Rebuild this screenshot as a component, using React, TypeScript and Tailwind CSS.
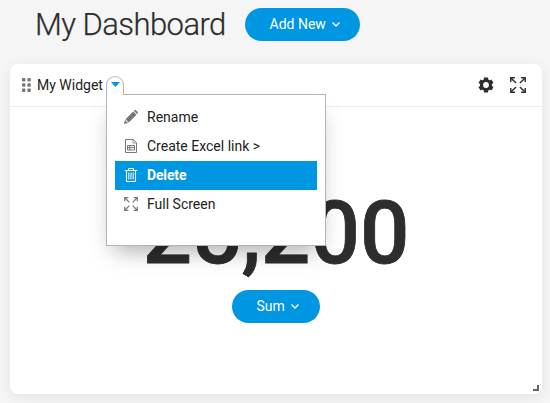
import React, { useState } from 'react';

type IconProps = { className?: string };

const PencilIcon = ({ className }: IconProps) => (
  <svg viewBox="0 0 14 14" className={className} fill="currentColor">
    <path d="M0 14l1-4.1L4.1 13 0 14z" />
    <path d="M1.5 9.2L9.2 1.5l3.3 3.3-7.7 7.7z" />
    <path d="M9.9.9l.5-.5c.5-.5 1.3-.5 1.8 0l1.4 1.4c.5.5.5 1.3 0 1.8l-.5.5z" />
  </svg>
);

const SheetIcon = ({ className }: IconProps) => (
  <svg viewBox="0 0 14 14" className={className} fill="none" stroke="currentColor">
    <path d="M1.5.5h7.8l3.2 3.2v9.8h-11z" />
    <path d="M9 .8V4h3.2" strokeWidth=".8" />
    <path d="M3.5 6.5h7v4.5h-7zM3.5 8.6h7M5.8 6.5V11" />
  </svg>
);

const TrashIcon = ({ className }: IconProps) => (
  <svg viewBox="0 0 14 14" className={className} fill="none" stroke="currentColor">
    <path d="M.8 2.5h12.4M4.5 2.3V.5h5v1.8" />
    <path d="M2.5 2.5v10.2q0 .8.8.8h7.4q.8 0 .8-.8V2.5" strokeWidth="1.1" />
    <path d="M4.8 4.5v7M7 4.5v7M9.2 4.5v7" />
  </svg>
);

const ExpandIcon = ({ className }: IconProps) => (
  <svg viewBox="0 0 16 16" className={className} fill="none" stroke="currentColor" strokeWidth="1.4">
    <path d="M4.9.8H.8v4.1M11.1.8h4.1v4.1M.8 11.1v4.1h4.1M15.2 11.1v4.1h-4.1" />
    <path d="M.9.9l5.2 5.2M15.1.9L9.9 6.1M.9 15.1l5.2-5.2M15.1 15.1L9.9 9.9" />
  </svg>
);

const GearIcon = ({ className }: IconProps) => (
  <svg viewBox="0 0 16 16" className={className} fill="none" stroke="currentColor">
    <circle cx="8" cy="8" r="4.5" strokeWidth="3.2" />
    <path
      d="M8 .5v3M8 12.5v3M1.5 4.25l2.6 1.5M11.9 10.25l2.6 1.5M14.5 4.25l-2.6 1.5M4.1 10.25l-2.6 1.5"
      strokeWidth="4.2"
    />
  </svg>
);

const DragIcon = ({ className }: IconProps) => (
  <svg viewBox="0 0 9 14" className={className} fill="currentColor">
    {[0, 5.3, 10.6].map((y) => (
      <g key={y}>
        <rect x="0" y={y} width="3.4" height="3.4" rx="1" />
        <rect x="5.4" y={y} width="3.4" height="3.4" rx="1" />
      </g>
    ))}
  </svg>
);

const ChevronIcon = ({ className }: IconProps) => (
  <svg viewBox="0 0 8 5" className={className} fill="none" stroke="currentColor" strokeWidth="1.25">
    <path d="M.5.5L4 4 7.5.5" />
  </svg>
);

const menuItems = [
  { label: 'Rename', icon: PencilIcon },
  { label: 'Create Excel link >', icon: SheetIcon },
  { label: 'Delete', icon: TrashIcon },
  { label: 'Full Screen', icon: ExpandIcon },
];

const WidgetMenu = () => {
  const [active, setActive] = useState('Delete');

  return (
    <div className="absolute top-[18px] left-0 z-10 h-[152px] w-[220px] border border-[#b4b4b4] bg-white px-2 pt-2 shadow-[0_12px_22px_-8px_rgba(0,0,0,0.35)]">
      {menuItems.map(({ label, icon: Icon }) => (
        <button
          key={label}
          type="button"
          onMouseEnter={() => setActive(label)}
          className={
            active === label
              ? 'flex h-[29px] w-full items-center gap-[9px] bg-[#0096e1] pl-[9px] text-left font-bold tracking-[-0.15px] text-white'
              : 'flex h-[29px] w-full items-center gap-[9px] pl-[9px] text-left text-[#222]'
          }
        >
          <Icon className={active === label ? 'size-3.5 text-white' : 'size-3.5 text-[#777]'} />
          <span className="text-[14px] whitespace-nowrap">{label}</span>
        </button>
      ))}
    </div>
  );
};

const App = () => {
  return (
    <div className="h-[403px] w-[550px] overflow-hidden bg-[#f5f5f5] font-['Roboto',sans-serif] text-[#2d2d2d]">
      {/* Page title */}
      <header className="flex h-16 items-start pt-2 pl-[35px]">
        <h1 className="w-[210px] text-[31px] leading-[33px] font-light tracking-[-0.55px] whitespace-nowrap [-webkit-text-stroke:0.25px_#2d2d2d]">My Dashboard</h1>
        <button type="button" className="flex h-[33px] w-[115px] items-center gap-[6px] rounded-full bg-[#0096e1] pl-[24.5px] text-[14px] text-white">
          Add New
          <ChevronIcon className="h-[5px] w-2" />
        </button>
      </header>

      {/* Widget */}
      <section className="ml-[10px] flex h-[330px] w-[532px] flex-col rounded-lg bg-white shadow-[0_3px_14px_rgba(0,0,0,0.08)]">
        <div className="flex h-[43px] shrink-0 items-center border-b border-[#eee] pr-4 pl-3">
          <DragIcon className="h-[14px] w-[9px] text-[#777]" />
          <span className="ml-[6px] w-[69px] text-[14px] whitespace-nowrap text-[#222]">My Widget</span>
          <div className="relative h-[19px] w-[18px]">
            <button type="button" className="relative z-20 flex h-[19px] w-[18px] justify-center rounded-t-[9px] border border-b-0 border-[#b4b4b4] bg-white pt-[5px]">
              <svg viewBox="0 0 9 5" className="h-[5px] w-[9px]" fill="#0096e1">
                <path d="M0 0h9L4.5 5z" />
              </svg>
            </button>
            <WidgetMenu />
          </div>
          <GearIcon className="ml-auto size-4" />
          <ExpandIcon className="ml-4 size-4" />
        </div>

        <div className="flex flex-1 flex-col items-center">
          <div className="mt-[82px] text-[87px] leading-[88px] font-medium [-webkit-text-stroke:0.8px_#2d2d2d]">25,200</div>
          <button type="button" className="mt-[13px] flex h-[33px] w-[88px] items-center gap-[6px] rounded-full bg-[#0096e1] pl-[24.5px] text-[14px] text-white">
            Sum
            <ChevronIcon className="h-[5px] w-2" />
          </button>
          <span className="mt-auto mr-[3px] mb-[3px] size-[6px] self-end border-r-2 border-b-2 border-[#666]" />
        </div>
      </section>
    </div>
  );
};

export default App;
